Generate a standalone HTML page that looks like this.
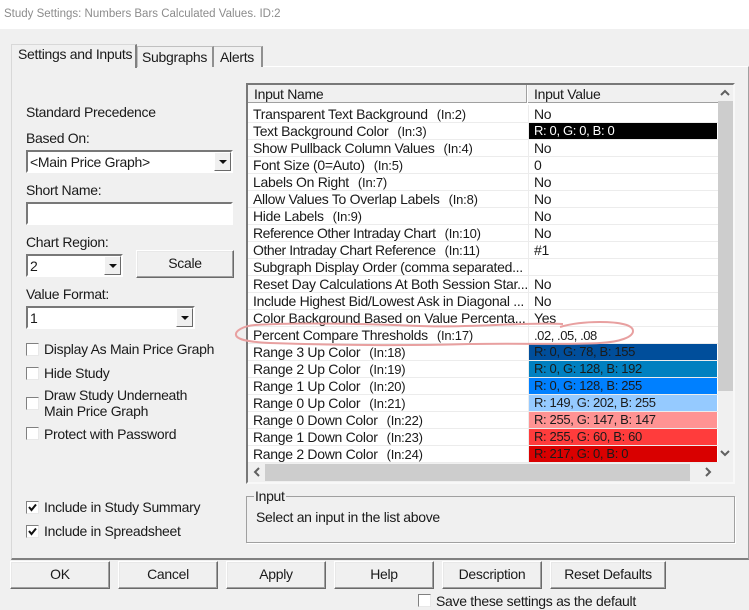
<!DOCTYPE html>
<html><head><meta charset="utf-8"><style>
html,body{margin:0;padding:0}
body{width:749px;height:610px;position:relative;overflow:hidden;background:#f0f0f0;font:14px/17px "Liberation Sans",sans-serif;color:#1a1a1a;letter-spacing:-.3px}
div,span.t{position:absolute;box-sizing:border-box;white-space:nowrap}
.btn{background:#f0f0f0;border:1px solid;border-color:#fff #6a6a6a #6a6a6a #fff;box-shadow:inset -1px -1px 0 #a0a0a0,inset 1px 1px 0 #e8e8e8;text-align:center;line-height:25px;top:561px;height:28px;width:100px}
.in{background:#fff;border:2px solid;border-color:#787878 #fff #fff #787878;height:23px}
.arr{background:#f0f0f0;border:1px solid;border-color:#fff #6a6a6a #6a6a6a #fff;width:17px;height:19px;top:0;right:0}
.arr:after{content:"";position:absolute;left:4px;top:7px;border:4px solid transparent;border-top:4px solid #111;border-bottom:0}
.cb{left:26px;width:13px;height:13px;background:#fff;border:1px solid;border-color:#808080 #e8e8e8 #e8e8e8 #808080}
.l{left:253px}.v{left:534px}
.l i{font-style:normal;font-size:13px;letter-spacing:-.2px;margin-left:9px}
.row{left:248px;width:470px;height:1px;background:#ececec}
.c{left:529px;width:188px;height:16px;padding-left:5px;line-height:16px;font-size:13px;letter-spacing:-.35px}
</style></head><body>
<div style="left:0;top:0;width:749px;height:29px;background:#fff"></div>
<div style="left:4px;top:6px;color:#8c8c8c;font-size:11.500px;letter-spacing:0">Study Settings: Numbers Bars Calculated Values. ID:2</div>

<div style="left:11px;top:66px;width:738px;height:494px;border:1px solid;border-width:1px 1px 2px 1px;border-color:#fff #a0a0a0 #808080 #d8d8d8;background:#f0f0f0"></div>
<div style="left:137px;top:46px;width:77px;height:21px;border:1px solid #c0c0c0;border-right:2px solid #909090;border-bottom:0;background:#f0f0f0;padding-left:4px;line-height:20px">Subgraphs</div>
<div style="left:214px;top:46px;width:49px;height:21px;border-top:1px solid #c0c0c0;border-right:2px solid #909090;background:#f0f0f0;padding-left:6px;line-height:20px">Alerts</div>
<div style="left:11px;top:44px;width:126px;height:24px;border:1px solid #d8d8d8;border-right:2px solid #808080;border-bottom:0;background:#f0f0f0;padding-left:6px;line-height:19px">Settings and Inputs</div>

<div style="left:26px;top:104px">Standard Precedence</div>
<div style="left:26px;top:130px">Based On:</div>
<div class="in" style="left:26px;top:150px;width:207px"><div style="left:2px;top:2px">&lt;Main Price Graph&gt;</div><div class="arr"></div></div>
<div style="left:26px;top:182px">Short Name:</div>
<div class="in" style="left:26px;top:202px;width:207px"></div>
<div style="left:26px;top:234px">Chart Region:</div>
<div class="in" style="left:26px;top:254px;width:97px"><div style="left:2px;top:2px">2</div><div class="arr"></div></div>
<div class="btn" style="left:136px;top:250px;width:98px;height:28px;line-height:25px">Scale</div>
<div style="left:26px;top:286px">Value Format:</div>
<div class="in" style="left:26px;top:306px;width:169px"><div style="left:2px;top:2px">1</div><div class="arr"></div></div>

<div class="cb" style="top:343px"></div><div style="left:44px;top:341px">Display As Main Price Graph</div>
<div class="cb" style="top:367px"></div><div style="left:44px;top:365px">Hide Study</div>
<div class="cb" style="top:397px"></div><div style="left:44px;top:387px">Draw Study Underneath</div><div style="left:44px;top:403px">Main Price Graph</div>
<div class="cb" style="top:427px"></div><div style="left:44px;top:426px">Protect with Password</div>
<div class="cb" style="top:501px"><svg width="11" height="11" style="position:absolute;left:0;top:0"><path d="M2 5l2.500 3L9 2.500" fill="none" stroke="#111" stroke-width="2"/></svg></div><div style="left:44px;top:499px">Include in Study Summary</div>
<div class="cb" style="top:525px"><svg width="11" height="11" style="position:absolute;left:0;top:0"><path d="M2 5l2.500 3L9 2.500" fill="none" stroke="#111" stroke-width="2"/></svg></div><div style="left:44px;top:523px">Include in Spreadsheet</div>

<!-- list -->
<div style="left:246px;top:83px;width:489px;height:401px;background:#fff;border:2px solid;border-color:#787878 #f8f8f8 #f8f8f8 #787878"></div>
<div style="left:248px;top:85px;width:279px;height:18px;background:#f0f0f0;border-right:1px solid #a0a0a0;border-bottom:1px solid #a0a0a0;line-height:18px;padding-left:6px">Input Name</div>
<div style="left:528px;top:85px;width:190px;height:18px;background:#f0f0f0;border-bottom:1px solid #a0a0a0;line-height:18px;padding-left:6px">Input Value</div>
<div style="left:718px;top:85px;width:15px;height:378px;background:#f0f0f0"></div>
<div style="left:718px;top:101px;width:15px;height:290px;background:#cdcdcd"></div>
<div style="left:248px;top:463px;width:485px;height:19px;background:#f0f0f0"></div>
<div style="left:265px;top:464px;width:425px;height:17px;background:#cdcdcd"></div>
<svg style="position:absolute;left:0;top:0" width="749" height="610">
<path d="M721 95l4-4 4 4M721 451l4 4 4-4M259 468l-4 4 4 4M706 468l4 4-4 4" fill="none" stroke="#606060" stroke-width="2"/>
</svg>

<div class="row" style="top:122px"></div><div class="row" style="top:139px"></div><div class="row" style="top:156px"></div><div class="row" style="top:173px"></div><div class="row" style="top:190px"></div><div class="row" style="top:207px"></div><div class="row" style="top:224px"></div><div class="row" style="top:241px"></div><div class="row" style="top:258px"></div><div class="row" style="top:275px"></div><div class="row" style="top:292px"></div><div class="row" style="top:309px"></div><div class="row" style="top:326px"></div><div class="row" style="top:343px"></div><div class="row" style="top:360px"></div><div class="row" style="top:377px"></div><div class="row" style="top:394px"></div><div class="row" style="top:411px"></div><div class="row" style="top:428px"></div><div class="row" style="top:445px"></div><div class="row" style="top:462px"></div>
<div style="left:528px;top:105px;width:1px;height:358px;background:#ececec"></div>

<div class="l" style="top:106px">Transparent Text Background<i>(In:2)</i></div><div class="v" style="top:106px">No</div>
<div class="l" style="top:123px">Text Background Color<i>(In:3)</i></div><div class="c" style="top:123px;background:#000;color:#fff">R: 0, G: 0, B: 0</div>
<div class="l" style="top:140px">Show Pullback Column Values<i>(In:4)</i></div><div class="v" style="top:140px">No</div>
<div class="l" style="top:157px">Font Size (0=Auto)<i>(In:5)</i></div><div class="v" style="top:157px">0</div>
<div class="l" style="top:174px">Labels On Right<i>(In:7)</i></div><div class="v" style="top:174px">No</div>
<div class="l" style="top:191px">Allow Values To Overlap Labels<i>(In:8)</i></div><div class="v" style="top:191px">No</div>
<div class="l" style="top:208px">Hide Labels<i>(In:9)</i></div><div class="v" style="top:208px">No</div>
<div class="l" style="top:225px;letter-spacing:-.45px">Reference Other Intraday Chart<i>(In:10)</i></div><div class="v" style="top:225px">No</div>
<div class="l" style="top:242px;letter-spacing:-.45px">Other Intraday Chart Reference<i>(In:11)</i></div><div class="v" style="top:242px">#1</div>
<div class="l" style="top:259px">Subgraph Display Order (comma separated...</div>
<div class="l" style="top:276px">Reset Day Calculations At Both Session Star...</div><div class="v" style="top:276px">No</div>
<div class="l" style="top:293px">Include Highest Bid/Lowest Ask in Diagonal ...</div><div class="v" style="top:293px">No</div>
<div class="l" style="top:310px">Color Background Based on Value Percenta...</div><div class="v" style="top:310px">Yes</div>
<div class="l" style="top:327px">Percent Compare Thresholds<i>(In:17)</i></div><div class="v" style="top:327px;font-size:13px;letter-spacing:-.45px">.02, .05, .08</div>
<div class="l" style="top:344px">Range 3 Up Color<i>(In:18)</i></div><div class="c" style="top:344px;background:#004e9b">R: 0, G: 78, B: 155</div>
<div class="l" style="top:361px">Range 2 Up Color<i>(In:19)</i></div><div class="c" style="top:361px;background:#0080c0">R: 0, G: 128, B: 192</div>
<div class="l" style="top:378px">Range 1 Up Color<i>(In:20)</i></div><div class="c" style="top:378px;background:#0080ff">R: 0, G: 128, B: 255</div>
<div class="l" style="top:395px">Range 0 Up Color<i>(In:21)</i></div><div class="c" style="top:395px;background:#95caff">R: 149, G: 202, B: 255</div>
<div class="l" style="top:412px">Range 0 Down Color<i>(In:22)</i></div><div class="c" style="top:412px;background:#ff9393">R: 255, G: 147, B: 147</div>
<div class="l" style="top:429px">Range 1 Down Color<i>(In:23)</i></div><div class="c" style="top:429px;background:#ff3c3c">R: 255, G: 60, B: 60</div>
<div class="l" style="top:446px">Range 2 Down Color<i>(In:24)</i></div><div class="c" style="top:446px;background:#d90000">R: 217, G: 0, B: 0</div>

<svg style="position:absolute;left:0;top:0" width="749" height="610">
<path d="M563 324C520 322 470 328 420 326C370 324 300 322 255 325C243 326 235 331 236 335C237 340 250 342 270 343C330 345 400 346 470 344C520 343 570 345 600 343C620 342 633 337 633 331C633 325 620 322 600 322C585 322 570 324 560 327" fill="none" stroke="#e8a0a0" stroke-width="2"/>
</svg>

<!-- input group -->
<div style="left:246px;top:496px;width:489px;height:47px;border:1px solid #a0a0a0;box-shadow:1px 1px 0 #fff"></div>
<div style="left:254px;top:488px;background:#f0f0f0;padding:0 1px">Input</div>
<div style="left:256px;top:509px">Select an input in the list above</div>

<!-- buttons -->
<div class="btn" style="left:10px">OK</div>
<div class="btn" style="left:118px">Cancel</div>
<div class="btn" style="left:226px">Apply</div>
<div class="btn" style="left:334px">Help</div>
<div class="btn" style="left:442px">Description</div>
<div class="btn" style="left:550px;width:116px">Reset Defaults</div>
<div class="cb" style="left:418px;top:594px"></div>
<div style="left:436px;top:593px">Save these settings as the default</div>
</body></html>
